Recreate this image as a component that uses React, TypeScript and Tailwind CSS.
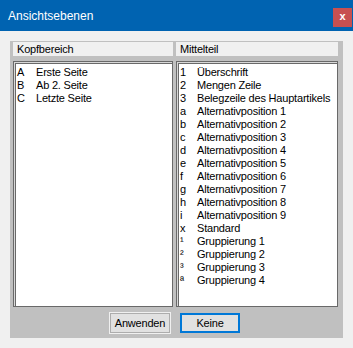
import React from "react";

const left: [string, string][] = [
  ["A", "Erste Seite"],
  ["B", "Ab 2. Seite"],
  ["C", "Letzte Seite"],
];

const mid: [string, string][] = [
  ["1", "Überschrift"],
  ["2", "Mengen Zeile"],
  ["3", "Belegzeile des Hauptartikels"],
  ["a", "Alternativposition 1"],
  ["b", "Alternativposition 2"],
  ["c", "Alternativposition 3"],
  ["d", "Alternativposition 4"],
  ["e", "Alternativposition 5"],
  ["f", "Alternativposition 6"],
  ["g", "Alternativposition 7"],
  ["h", "Alternativposition 8"],
  ["i", "Alternativposition 9"],
  ["x", "Standard"],
  ["¹", "Gruppierung 1"],
  ["²", "Gruppierung 2"],
  ["³", "Gruppierung 3"],
  ["ª", "Gruppierung 4"],
];

function ListBox({ items, keyW }: { items: [string, string][]; keyW: string }) {
  return (
    <div className="h-[246px] border border-[#696969] bg-white">
      <div className="h-full border-l border-t border-[#d8d8d8]">
        <div className="h-full border-l border-t border-[#696969] pt-[2px] pl-[1px]">
          {items.map(([k, v]) => (
            <div
              key={k + v}
              className="flex h-[13px] items-center text-[11px] leading-[13px] tracking-[-0.2px] text-black"
            >
              <span className={keyW}>{k}</span>
              <span>{v}</span>
            </div>
          ))}
        </div>
      </div>
    </div>
  );
}

export default function App() {
  return (
    <div
      className="w-[353px] h-[348px] bg-[#f0f0f0] overflow-hidden"
      style={{ fontFamily: '"Liberation Sans", Arial, sans-serif' }}
    >
      <div className="h-[31px] bg-[#0063b1] flex justify-between">
        <div className="pl-[8px] pt-[8px] text-[12px] leading-[16px] text-white">Ansichtsebenen</div>
        <div className="mt-[8px] mr-[1px] w-[19px] h-[19px] bg-[#c75050] flex items-center justify-center text-white text-[11px] font-bold leading-none pb-[2px]">
          x
        </div>
      </div>
      <div className="mt-[10px] ml-[10px] w-[333px] h-[297px] bg-[#c0c0c0] pt-[1px] pl-[3px] pr-[5px]">
        <div className="grid grid-cols-[160px_162px] gap-x-[3px]">
          <div className="h-[14px] bg-[#f0f0f0] pl-[4px] text-[11px] leading-[14px] tracking-[-0.2px] text-black">
            Kopfbereich
          </div>
          <div className="h-[14px] bg-[#f0f0f0] pl-[4px] text-[11px] leading-[14px] tracking-[-0.2px] text-black">
            Mittelteil
          </div>
          <div className="mt-[5px]">
            <ListBox items={left} keyW="w-[19px]" />
          </div>
          <div className="mt-[5px]">
            <ListBox items={mid} keyW="w-[17px]" />
          </div>
        </div>
        <div className="mt-[6px] flex justify-center gap-[10px] pr-[1px]">
          <button className="w-[60px] h-[20px] bg-[#e1e1e1] border border-[#adadad] outline outline-1 outline-[#f0f0f0] text-[11px] tracking-[-0.2px] text-black leading-none">
            Anwenden
          </button>
          <button className="w-[60px] h-[20px] bg-[#e1e1e1] border-2 border-[#0078d7] text-[11px] tracking-[-0.2px] text-black leading-none">
            Keine
          </button>
        </div>
      </div>
    </div>
  );
}
